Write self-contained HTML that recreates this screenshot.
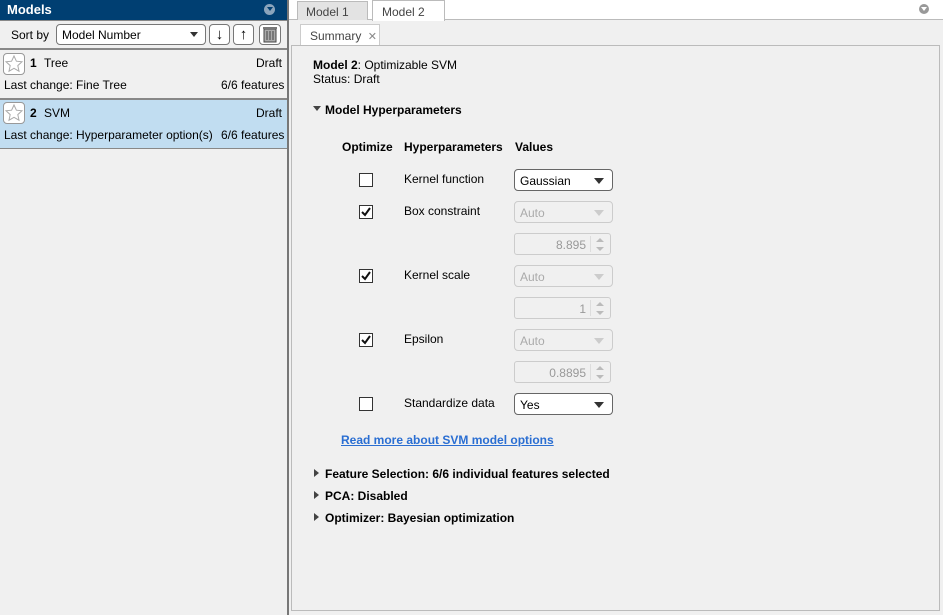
<!DOCTYPE html>
<html><head><meta charset="utf-8"><style>
*{box-sizing:border-box;margin:0;padding:0}
body{width:943px;height:615px;background:#f0f0f0;font-family:"Liberation Sans",Arial,sans-serif;font-size:12px;color:#000;position:relative;overflow:hidden}
.a{position:absolute}
.b{font-weight:bold}
.dd{position:absolute;width:99px;height:22px;border:1px solid #666;border-radius:4px;background:#fff;padding:4px 0 0 5px}
.dd:after{content:"";position:absolute;right:8px;top:8px;border-left:5px solid transparent;border-right:5px solid transparent;border-top:6px solid #333}
.dd.dis{border-color:#ccc;background:#f0f0f0;color:#aaa}
.dd.dis:after{border-top-color:#ccc}
.sp{position:absolute;width:97px;height:22px;border:1px solid #ccc;border-radius:3px;color:#999;text-align:right;padding:4px 24px 0 0}
.sp:before{content:"";position:absolute;right:6px;top:4px;border-left:4px solid transparent;border-right:4px solid transparent;border-bottom:4px solid #bbb}
.sp:after{content:"";position:absolute;right:6px;top:13px;border-left:4px solid transparent;border-right:4px solid transparent;border-top:4px solid #bbb}
.sp i{position:absolute;right:19px;top:2px;bottom:2px;border-left:1px solid #ddd}
.cb{position:absolute;left:359px;width:14px;height:14px;border:1px solid #333;background:#fff}
.tri{position:absolute;width:0;height:0;border-top:4px solid transparent;border-bottom:4px solid transparent;border-left:5px solid #444}
.star{position:absolute;left:3px;width:22px;height:22px;border:1px solid #999;border-radius:4px;background:#fff}
</style></head><body>
<!-- left panel -->
<div class="a" style="left:0;top:0;width:287px;height:20px;background:#003f72;color:#fff;font-weight:bold;font-size:13px;padding:2px 0 0 7px">Models</div>
<div class="a" style="left:264px;top:4px;width:11px;height:11px;border-radius:50%;background:#8aa4bc"></div>
<div class="a" style="left:267px;top:7px;border-left:3px solid transparent;border-right:3px solid transparent;border-top:4px solid #003f72"></div>
<div class="a" style="left:287px;top:0;width:2px;height:615px;background:#777"></div>
<div class="a" style="left:0;top:20px;width:287px;height:1px;background:#888"></div>
<div class="a" style="left:11px;top:28px">Sort by</div>
<div class="a" style="left:56px;top:24px;width:150px;height:21px;border:1px solid #777;border-radius:4px;background:#fff;padding:3px 0 0 5px">Model Number</div>
<div class="a" style="left:190px;top:32px;border-left:4px solid transparent;border-right:4px solid transparent;border-top:5px solid #333"></div>
<div class="a" style="left:209px;top:24px;width:21px;height:21px;border:1px solid #777;border-radius:4px;background:#fff;font-size:15px;text-align:center;line-height:19px">&#8595;</div>
<div class="a" style="left:233px;top:24px;width:21px;height:21px;border:1px solid #777;border-radius:4px;background:#fff;font-size:15px;text-align:center;line-height:19px">&#8593;</div>
<div class="a" style="left:259px;top:24px;width:22px;height:21px;border:1px solid #777;border-radius:4px;background:#fff"><svg width="20" height="19" viewBox="0 0 20 19"><rect x="4" y="4" width="12" height="13" fill="#aaa" stroke="#444"/><rect x="3" y="2" width="14" height="2" fill="#777"/><path d="M7 6v9M10 6v9M13 6v9" stroke="#444"/></svg></div>
<div class="a" style="left:0;top:48px;width:287px;height:2px;background:#888"></div>
<div class="a" style="left:0;top:50px;width:287px;height:48px;background:#f0f0f0"></div>
<div class="star" style="top:53px"><svg width="20" height="20" viewBox="0 0 20 20"><path d="M10 2l2.4 5.2 5.6.6-4.2 3.8 1.2 5.6L10 14.3 5 17.2l1.2-5.6L2 7.8l5.6-.6z" fill="none" stroke="#aaa"/></svg></div>
<div class="a b" style="left:30px;top:56px">1</div><div class="a" style="left:44px;top:56px">Tree</div>
<div class="a" style="right:660px;top:56px;left:auto" ></div>
<div class="a" style="left:256px;top:56px">Draft</div>
<div class="a" style="left:4px;top:78px">Last change: Fine Tree</div>
<div class="a" style="left:221px;top:78px">6/6 features</div>
<div class="a" style="left:0;top:98px;width:287px;height:51px;background:#c1ddf1;border-top:2px solid #888;border-bottom:1px solid #888"></div>
<div class="star" style="top:102px"><svg width="20" height="20" viewBox="0 0 20 20"><path d="M10 2l2.4 5.2 5.6.6-4.2 3.8 1.2 5.6L10 14.3 5 17.2l1.2-5.6L2 7.8l5.6-.6z" fill="none" stroke="#aaa"/></svg></div>
<div class="a b" style="left:30px;top:106px">2</div><div class="a" style="left:44px;top:106px">SVM</div>
<div class="a" style="left:256px;top:106px">Draft</div>
<div class="a" style="left:4px;top:128px">Last change: Hyperparameter option(s)</div>
<div class="a" style="left:221px;top:128px">6/6 features</div>
<!-- right -->
<div class="a" style="left:289px;top:0;width:654px;height:20px;background:#fff;border-bottom:1px solid #bbb"></div>
<div class="a" style="left:297px;top:1px;width:71px;height:19px;background:#e3e3e3;border:1px solid #bbb;border-bottom:none;color:#444;padding:3px 0 0 8px">Model 1</div>
<div class="a" style="left:372px;top:0;width:73px;height:21px;background:#fff;border:1px solid #bbb;border-bottom:none;color:#444;padding:4px 0 0 9px">Model 2</div>
<div class="a" style="left:919px;top:4px;width:10px;height:10px;border-radius:50%;background:#999"></div>
<div class="a" style="left:921px;top:7px;border-left:3px solid transparent;border-right:3px solid transparent;border-top:4px solid #fff"></div>
<div class="a" style="left:300px;top:24px;width:80px;height:22px;background:#fff;border:1px solid #ccc;border-bottom:none;color:#444;padding:4px 0 0 9px">Summary <span style="color:#888;font-size:11px;margin-left:3px">&#10005;</span></div>
<div class="a" style="left:291px;top:45px;width:649px;height:566px;border:1px solid #bbb"></div>
<div class="a" style="left:313px;top:58px"><b>Model 2</b>: Optimizable SVM</div>
<div class="a" style="left:313px;top:72px">Status: Draft</div>
<div class="a" style="left:313px;top:106px;border-left:4px solid transparent;border-right:4px solid transparent;border-top:5px solid #444"></div>
<div class="a b" style="left:325px;top:103px">Model Hyperparameters</div>
<div class="a b" style="left:342px;top:140px">Optimize</div>
<div class="a b" style="left:404px;top:140px">Hyperparameters</div>
<div class="a b" style="left:515px;top:140px">Values</div>
<div class="cb" style="top:173px"></div>
<div class="a" style="left:404px;top:172px">Kernel function</div>
<div class="dd" style="left:514px;top:169px">Gaussian</div>
<div class="cb" style="top:205px"><svg width="12" height="12" viewBox="0 0 12 12"><path d="M2 6l3 3 5-7" fill="none" stroke="#111" stroke-width="2"/></svg></div>
<div class="a" style="left:404px;top:204px">Box constraint</div>
<div class="dd dis" style="left:514px;top:201px">Auto</div>
<div class="sp" style="left:514px;top:233px">8.895<i></i></div>
<div class="cb" style="top:269px"><svg width="12" height="12" viewBox="0 0 12 12"><path d="M2 6l3 3 5-7" fill="none" stroke="#111" stroke-width="2"/></svg></div>
<div class="a" style="left:404px;top:268px">Kernel scale</div>
<div class="dd dis" style="left:514px;top:265px">Auto</div>
<div class="sp" style="left:514px;top:297px">1<i></i></div>
<div class="cb" style="top:333px"><svg width="12" height="12" viewBox="0 0 12 12"><path d="M2 6l3 3 5-7" fill="none" stroke="#111" stroke-width="2"/></svg></div>
<div class="a" style="left:404px;top:332px">Epsilon</div>
<div class="dd dis" style="left:514px;top:329px">Auto</div>
<div class="sp" style="left:514px;top:361px">0.8895<i></i></div>
<div class="cb" style="top:397px"></div>
<div class="a" style="left:404px;top:396px">Standardize data</div>
<div class="dd" style="left:514px;top:393px">Yes</div>
<div class="a b" style="left:341px;top:433px;color:#2a6ed2;text-decoration:underline">Read more about SVM model options</div>
<div class="tri" style="left:314px;top:469px"></div><div class="a b" style="left:325px;top:467px">Feature Selection: 6/6 individual features selected</div>
<div class="tri" style="left:314px;top:491px"></div><div class="a b" style="left:325px;top:489px">PCA: Disabled</div>
<div class="tri" style="left:314px;top:513px"></div><div class="a b" style="left:325px;top:511px">Optimizer: Bayesian optimization</div>
</body></html>
